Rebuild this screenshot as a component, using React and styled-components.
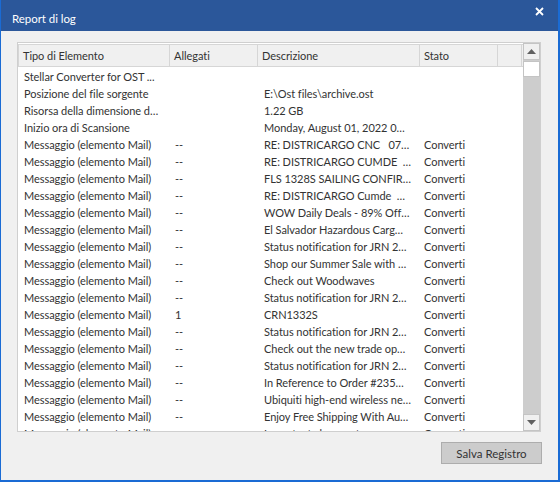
import React from 'react';
import styled, { createGlobalStyle } from 'styled-components';

const GlobalStyle = createGlobalStyle`
  html, body {
    margin: 0;
    padding: 0;
    background: #ffffff;
  }
  body {
    font-family: Lato, "Noto Sans", "Liberation Sans", sans-serif;
    font-size: 11px;
    letter-spacing: -0.05px;
    color: #333333;
  }
`;

const Window = styled.div`
  width: 560px;
  height: 482px;
  box-sizing: border-box;
  display: flex;
  flex-direction: column;
  background: #f0f0f0;
  border-left: 1px solid #1a6bd4;
  border-right: 2px solid #1a6bd4;
  border-bottom: 2px solid #1a6bd4;
`;

const TitleBar = styled.div`
  height: 31px;
  flex: none;
  background: #2b579a;
  display: flex;
  align-items: flex-start;
  justify-content: space-between;
  padding: 0 0 0 11px;
  color: #ffffff;
  font-size: 11.5px;
`;

const Title = styled.span`
  padding-top: 12px;
`;

const CloseButton = styled.div`
  width: 20px;
  height: 20px;
  margin: 1px 9px 0 0;
  display: flex;
  align-items: center;
  justify-content: center;
`;

const Body = styled.div`
  flex: 1;
  display: flex;
  flex-direction: column;
  padding: 11px 17px 0 16px;
`;

const ListBox = styled.div`
  height: 390px;
  box-sizing: border-box;
  border: 1px solid #cfcfcf;
  background: #ffffff;
  display: flex;
  overflow: hidden;
`;

const ListMain = styled.div`
  flex: 1;
  display: flex;
  flex-direction: column;
  overflow: hidden;
  padding-top: 1px;
`;

const HeaderRow = styled.div`
  display: flex;
  height: 23px;
  flex: none;
  box-sizing: border-box;
  background: #f0f0f0;
  border-top: 1px solid #d6d6d6;
  border-bottom: 1px solid #d6d6d6;
  border-left: 1px solid #d6d6d6;
`;

const HeaderCell = styled.div`
  width: ${p => p.$w}px;
  flex: none;
  box-sizing: border-box;
  border-right: 1px solid #d6d6d6;
  padding-left: 4px;
  display: flex;
  align-items: center;
  white-space: nowrap;
  overflow: hidden;
`;

const Rows = styled.div`
  padding-top: 1px;
`;

const Row = styled.div`
  display: flex;
  height: 17px;
  align-items: center;
`;

const Cell = styled.div`
  width: ${p => p.$w}px;
  flex: none;
  box-sizing: border-box;
  padding-left: ${p => p.$pad}px;
  white-space: nowrap;
`;

const ScrollBar = styled.div`
  width: 17px;
  flex: none;
  display: flex;
  flex-direction: column;
  background: #cdcdcd;
`;

const ScrollButton = styled.div`
  height: 17px;
  flex: none;
  box-sizing: border-box;
  background: #f0f0f0;
  border: 1px solid #c4c4c4;
  display: flex;
  align-items: center;
  justify-content: center;
`;

const Thumb = styled.div`
  height: 16px;
  flex: none;
  box-sizing: border-box;
  background: #ffffff;
  border: 1px solid #c4c4c4;
  margin-top: 1px;
`;

const Track = styled.div`
  flex: 1;
`;

const Footer = styled.div`
  display: flex;
  justify-content: flex-end;
  padding-top: 10px;
  margin-right: -1px;
`;

const Button = styled.button`
  width: 101px;
  height: 22px;
  background: #cccccc;
  border: 1px solid #adadad;
  font-family: inherit;
  font-size: 11.5px;
  color: #333333;
  padding: 0;
`;

const widths = [152, 88, 162, 78, 24];
const pads = [6, 5, 6, 4];
const headers = ['Tipo di Elemento', 'Allegati', 'Descrizione', 'Stato', ''];

const M = 'Messaggio (elemento Mail)';
const rows = [
  ['Stellar Converter for OST ...', '', '', ''],
  ['Posizione del file sorgente', '', 'E:\\Ost files\\archive.ost', ''],
  ['Risorsa della dimensione d…', '', '1.22 GB', ''],
  ['Inizio ora di Scansione', '', 'Monday, August 01, 2022 0…', ''],
  [M, '--', 'RE: DISTRICARGO CNC\u00a0\u00a0\u00a007…', 'Converti'],
  [M, '--', 'RE: DISTRICARGO CUMDE\u00a0\u00a0…', 'Converti'],
  [M, '--', 'FLS 1328S SAILING CONFIR…', 'Converti'],
  [M, '--', 'RE: DISTRICARGO Cumde\u00a0\u00a0…', 'Converti'],
  [M, '--', 'WOW Daily Deals - 89% Off…', 'Converti'],
  [M, '--', 'El Salvador Hazardous Carg…', 'Converti'],
  [M, '--', 'Status notification for JRN 2…', 'Converti'],
  [M, '--', 'Shop our Summer Sale with …', 'Converti'],
  [M, '--', 'Check out Woodwaves', 'Converti'],
  [M, '--', 'Status notification for JRN 2…', 'Converti'],
  [M, '1', 'CRN1332S', 'Converti'],
  [M, '--', 'Status notification for JRN 2…', 'Converti'],
  [M, '--', 'Check out the new trade op…', 'Converti'],
  [M, '--', 'Status notification for JRN 2…', 'Converti'],
  [M, '--', 'In Reference to Order #235…', 'Converti'],
  [M, '--', 'Ubiquiti high-end wireless ne…', 'Converti'],
  [M, '--', 'Enjoy Free Shipping With Au…', 'Converti'],
  [M, '--', 'Important changes to your acc…', 'Converti'],
];

const Arrow = ({ up }) => (
  <svg width="9" height="5" viewBox="0 0 9 5">
    <polygon points={up ? '0,5 9,5 4.5,0' : '0,0 9,0 4.5,5'} fill="#606060" />
  </svg>
);

export default function App() {
  return (
    <>
      <GlobalStyle />
      <Window>
        <TitleBar>
          <Title>Report di log</Title>
          <CloseButton>
            <svg width="9" height="9" viewBox="0 0 9 9">
              <path d="M1 1 L8 8 M8 1 L1 8" stroke="#ffffff" strokeWidth="1.8" />
            </svg>
          </CloseButton>
        </TitleBar>
        <Body>
          <ListBox>
            <ListMain>
              <HeaderRow>
                {headers.map((h, i) => (
                  <HeaderCell key={i} $w={i === 0 ? widths[0] - 1 : widths[i]}>{h}</HeaderCell>
                ))}
              </HeaderRow>
              <Rows>
                {rows.map((r, i) => (
                  <Row key={i}>
                    {r.map((c, j) => (
                      <Cell key={j} $w={widths[j]} $pad={pads[j]}>{c}</Cell>
                    ))}
                  </Row>
                ))}
              </Rows>
            </ListMain>
            <ScrollBar>
              <ScrollButton><Arrow up /></ScrollButton>
              <Thumb />
              <Track />
              <ScrollButton><Arrow /></ScrollButton>
            </ScrollBar>
          </ListBox>
          <Footer>
            <Button>Salva Registro</Button>
          </Footer>
        </Body>
      </Window>
    </>
  );
}
